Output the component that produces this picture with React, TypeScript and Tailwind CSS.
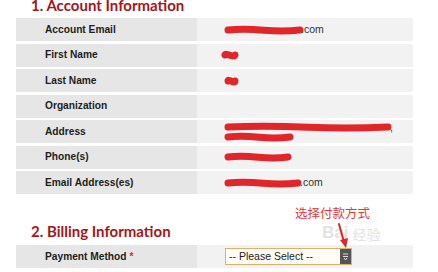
import React from "react";

type Row = { label: string; value: React.ReactNode };

function Scribble({ w, className = "" }: { w: number; className?: string }) {
  // red marker strokes hiding private data
  return (
    <svg width={w} height={10} viewBox={`0 0 ${w} 10`} className={"inline-block align-middle " + className}>
      <path
        d={`M4 5 Q ${w * 0.25} 3.6 ${w * 0.5} 5.3 T ${w - 4} 5`}
        stroke="#e0262a"
        strokeWidth={7}
        strokeLinecap="round"
        fill="none"
      />
    </svg>
  );
}

const rows: Row[] = [
  {
    label: "Account Email",
    value: (
      <span className="flex items-center">
        <Scribble w={80} />
        <span className="-ml-[3px]">.com</span>
      </span>
    ),
  },
  { label: "First Name", value: <Scribble w={18} className="-ml-[3px]" /> },
  { label: "Last Name", value: <Scribble w={15} /> },
  { label: "Organization", value: null },
  {
    label: "Address",
    value: (
      <span className="flex flex-col leading-[10px]">
        <span className="flex items-center">
          <Scribble w={168} />
          <span className="-ml-[2px]">,</span>
        </span>
        <Scribble w={70} />
      </span>
    ),
  },
  { label: "Phone(s)", value: <Scribble w={68} /> },
  {
    label: "Email Address(es)",
    value: (
      <span className="flex items-center">
        <Scribble w={78} />
        <span className="-ml-[2px]">.com</span>
      </span>
    ),
  },
];

function FieldRow({ label, children }: { label: React.ReactNode; children?: React.ReactNode }) {
  return (
    <div className="flex h-[23px] w-[397px]">
      <div className="flex w-[181px] items-center bg-[#e6e6e6] pl-[29px] text-[10.2px] font-bold text-[#1e1e1e]">
        {label}
      </div>
      <div className="flex flex-1 items-center bg-[#f2f2f2] pl-[27px] text-[10.5px] text-[#333]">
        {children}
      </div>
    </div>
  );
}

export default function App() {
  return (
    <div
      className="relative h-[272px] w-[438px] overflow-hidden bg-white pl-[16px]"
      style={{ fontFamily: '"Liberation Sans", Arial, sans-serif' }}
    >
      <h2
        className="-mt-[3px] h-[21px] pl-[15px] text-[15px] font-bold leading-[16px] text-[#a3161a]"
        style={{ fontFamily: "Lato, sans-serif" }}
      >
        1. Account Information
      </h2>

      <div className="flex flex-col gap-[2.5px]">
        {rows.map((r) => (
          <FieldRow key={r.label} label={r.label}>
            {r.value}
          </FieldRow>
        ))}
      </div>

      <h2
        className="mt-[29px] h-[22px] pl-[15px] text-[15px] font-bold leading-[16px] text-[#a3161a]"
        style={{ fontFamily: "Lato, sans-serif" }}
      >
        2. Billing Information
      </h2>

      <FieldRow
        label={
          <>
            Payment Method<span className="ml-[3px] text-[#e0262a]">*</span>
          </>
        }
      >
        <div className="ml-[1px] flex h-[17px] w-[127px] items-center border border-[#d9b36e] bg-[#fffdf6]">
          <span className="flex-1 pl-[3px] text-[10.5px] text-[#222]">-- Please Select --</span>
          <span className="flex h-[15px] w-[11px] items-center justify-center bg-[#555]">
            <svg width="7" height="9" viewBox="0 0 7 9">
              <path d="M1 2 L6 2 M1 4.5 L6 4.5 M2 6 L3.5 8 L5 6" stroke="#ddd" strokeWidth="1" fill="none" />
            </svg>
          </span>
        </div>
      </FieldRow>

      {/* watermark */}
      <div className="pointer-events-none absolute left-[322px] top-[224px] flex items-end gap-[4px] text-[#cfcfcf] opacity-60">
        <span className="text-[17px] font-bold leading-none">Bai</span>
        <span className="text-[14px] leading-none" style={{ fontFamily: '"Noto Sans CJK SC", sans-serif' }}>
          经验
        </span>
      </div>

      {/* annotation */}
      <div
        className="absolute left-[295px] top-[207px] text-[12.5px] leading-none text-[#e23a3a]"
        style={{ fontFamily: '"Noto Sans CJK SC", sans-serif' }}
      >
        选择付款方式
      </div>
      <svg className="absolute left-[334px] top-[222px]" width="20" height="30" viewBox="0 0 20 30">
        <path d="M5 2 L10 20" stroke="#e0262a" strokeWidth="2" strokeLinecap="round" />
        <path d="M6 18 L12 26 L14 16 Z" fill="#e0262a" />
      </svg>
    </div>
  );
}
